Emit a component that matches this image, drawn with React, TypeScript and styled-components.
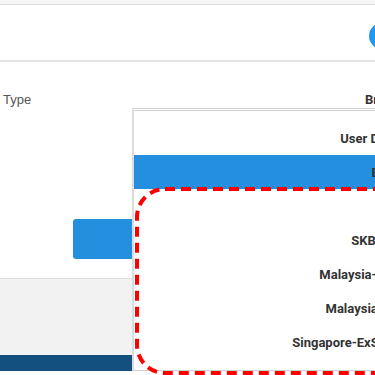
import React from 'react';
import styled, { createGlobalStyle } from 'styled-components';

const GlobalStyle = createGlobalStyle`
  html, body {
    margin: 0;
    padding: 0;
  }
  body {
    width: 375px;
    height: 375px;
    overflow: hidden;
    background: #fff;
    font-family: 'Liberation Sans', Arial, sans-serif;
  }
`;

const Page = styled.div`
  position: relative;
  width: 375px;
  height: 375px;
  overflow: hidden;
  display: flex;
  flex-direction: column;
`;

const TopStrip = styled.div`
  height: 4px;
  background: #f6f6f6;
  border-bottom: 1px solid #dcdcdc;
`;

const Header = styled.header`
  height: 55px;
  display: flex;
  justify-content: flex-end;
  border-bottom: 2px solid #e4e4e4;
`;

const Avatar = styled.div`
  width: 26px;
  height: 26px;
  margin-top: 18px;
  margin-right: -20px;
  flex-shrink: 0;
  border-radius: 50%;
  background: #2196f3;
`;

const Content = styled.main`
  height: 216px;
  display: flex;
  flex-direction: column;
  border-bottom: 1px solid #dedede;
`;

const LabelRow = styled.div`
  display: grid;
  grid-template-columns: 362px auto;
  padding: 30px 0 0 3px;
  height: 16px;
  white-space: nowrap;
`;

const Label = styled.span<{ $strong?: boolean }>`
  font-size: 13px;
  line-height: 16px;
  color: ${(p) => (p.$strong ? '#333' : '#555')};
  font-weight: ${(p) => (p.$strong ? 700 : 400)};
  font-family: ${(p) => (p.$strong ? 'Roboto, sans-serif' : "'Liberation Sans', Arial, sans-serif")};
`;

const PrimaryButton = styled.button`
  margin: 111px 0 0 73px;
  width: 120px;
  height: 40px;
  border: none;
  border-radius: 3px;
  background: #258fdf;
  color: #fff;
`;

const Footer = styled.footer`
  height: 76px;
  background: #f2f2f2;
`;

const BottomBar = styled.div`
  height: 16px;
  background: #14507f;
`;

const Dropdown = styled.ul`
  position: absolute;
  left: 132px;
  top: 108px;
  width: 498px;
  height: 249px;
  margin: 0;
  padding: 10px 0 0;
  list-style: none;
  background: #fff;
  border-top: 3px double #cfcfcf;
  border-left: 2px solid #dcdcdc;
  border-bottom: 1px solid #cfcfcf;
`;

const Option = styled.li<{ $active?: boolean }>`
  height: 34px;
  display: flex;
  align-items: center;
  justify-content: center;
  white-space: nowrap;
  font-family: Roboto, sans-serif;
  font-weight: 700;
  font-size: 13px;
  color: #333;
  background: ${(p) => (p.$active ? '#258fdf' : 'transparent')};
`;

const Highlight = styled.svg`
  position: absolute;
  left: 135px;
  top: 187px;
  width: 300px;
  height: 200px;
  overflow: visible;
  pointer-events: none;
`;

const options = [
  'User Definable',
  'EPF',
  '',
  'SKB/Bursa',
  'Malaysia-Singapore E',
  'Malaysia Singapore',
  'Singapore-ExSGX Settlements.',
];

export default function App() {
  return (
    <Page>
      <GlobalStyle />
      <TopStrip />
      <Header>
        <Avatar />
      </Header>
      <Content>
        <LabelRow>
          <Label>Type</Label>
          <Label $strong>Broker</Label>
        </LabelRow>
        <PrimaryButton />
      </Content>
      <Footer />
      <BottomBar />
      <Dropdown>
        {options.map((o, i) => (
          <Option key={i} $active={o === 'EPF'}>
            {o}
          </Option>
        ))}
      </Dropdown>
      <Highlight>
        <rect
          x="2"
          y="2"
          width="320"
          height="184"
          rx="28"
          fill="none"
          stroke="#f00"
          strokeWidth="4"
          strokeDasharray="10 6"
        />
      </Highlight>
    </Page>
  );
}
